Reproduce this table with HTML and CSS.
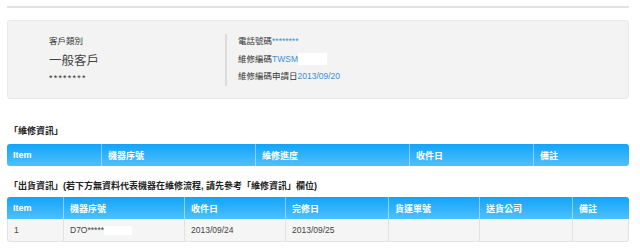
FILE: index.html
```html
<!DOCTYPE html>
<html lang="zh-Hant">
<head>
  <meta charset="UTF-8">
  <title>維修查詢</title>
  <link rel="stylesheet" href="styles.css">
</head>
<body>
  <div class="pagina">
    <hr class="riga">

    <div class="cliente">
      <div class="colonna sinistra">
        <p class="etichetta">客戶類別</p>
        <p class="tipo">一般客戶</p>
        <p class="stelle">********</p>
      </div>
      <div class="colonna destra">
        <p>電話號碼<span class="valore">********</span></p>
        <p>維修編碼<span class="valore">TWSM</span><span class="coperto"></span></p>
        <p>維修編碼申請日<span class="valore">2013/09/20</span></p>
      </div>
    </div>

    <h3 class="titolo">「維修資訊」</h3>
    <table class="tabella t1">
      <thead>
        <tr>
          <th class="c1">Item</th>
          <th class="c2">機器序號</th>
          <th class="c3">維修進度</th>
          <th class="c4">收件日</th>
          <th>備註</th>
        </tr>
      </thead>
    </table>

    <h3 class="titolo secondo">「出貨資訊」(若下方無資料代表機器在維修流程, 請先參考「維修資訊」欄位)</h3>
    <table class="tabella t2">
      <thead>
        <tr>
          <th class="d1">Item</th>
          <th class="d2">機器序號</th>
          <th class="d3">收件日</th>
          <th class="d4">完修日</th>
          <th class="d5">貨運單號</th>
          <th class="d6">送貨公司</th>
          <th>備註</th>
        </tr>
      </thead>
      <tbody>
        <tr>
          <td>1</td>
          <td>D7O*****<span class="coperto piccolo"></span></td>
          <td>2013/09/24</td>
          <td>2013/09/25</td>
          <td></td>
          <td></td>
          <td></td>
        </tr>
      </tbody>
    </table>
  </div>
</body>
</html>
```

FILE: styles.css
```css
* {
  box-sizing: border-box;
  margin: 0;
  padding: 0;
}

body {
  font-family: "Liberation Sans", "Noto Sans CJK TC", sans-serif;
  font-size: 8.5px;
  color: #333;
  background: #fff;
}

.pagina {
  width: 622px;
  margin-left: 7px;
  padding-top: 6px;
}

.riga {
  border: none;
  border-top: 2px solid #e2e2e2;
  margin-bottom: 12px;
}

/* riquadro dati cliente */
.cliente {
  display: flex;
  height: 79px;
  background: #f3f3f3;
  border: 1px solid #e9e9e9;
  border-radius: 3px;
  padding-top: 13px;
}

.colonna.sinistra {
  width: 217px;
  padding-left: 41px;
}

.etichetta {
  line-height: 14px;
}

.tipo {
  font-size: 12.5px;
  line-height: 20px;
  margin-top: 3px;
  color: #444;
}

.stelle {
  line-height: 12px;
  margin-top: 1px;
  font-size: 9px;
  letter-spacing: 1.2px;
}

.colonna.destra {
  border-left: 2px solid #dcdcdc;
  padding-left: 11px;
  height: 52px;
}

.colonna.destra p {
  line-height: 14px;
  margin-bottom: 3.5px;
  display: flex;
  align-items: center;
}

.valore {
  color: #3b8fd8;
}

.coperto {
  display: inline-block;
  width: 29px;
  height: 12px;
  background: #fff;
}

.coperto.piccolo {
  width: 28px;
  height: 9px;
  vertical-align: middle;
}

/* titoli di sezione */
.titolo {
  font-size: 9px;
  font-weight: bold;
  color: #222;
  margin-top: 26px;
  margin-left: 2px;
  line-height: 12px;
  margin-bottom: 7px;
}

.titolo.secondo {
  margin-top: 14px;
  margin-bottom: 5px;
}

/* tabelle */
.tabella {
  width: 100%;
  border-collapse: separate;
  border-spacing: 0;
  table-layout: fixed;
}

.tabella th {
  height: 22px;
  text-align: left;
  padding-left: 6px;
  font-size: 9px;
  color: #fff;
  font-weight: bold;
  background: linear-gradient(#12a4fa, #4ec0fb);
  border-left: 1px solid rgba(255, 255, 255, 0.45);
}

.tabella th:first-child {
  border-left: none;
  border-top-left-radius: 3px;
}

.tabella th:last-child {
  border-top-right-radius: 3px;
}

.t1 th:first-child {
  border-bottom-left-radius: 3px;
}

.t1 th:last-child {
  border-bottom-right-radius: 3px;
}

.tabella td {
  height: 23px;
  padding-left: 6px;
  background: #f5f5f5;
  color: #444;
  border-left: 1px solid #e2e2e2;
  border-bottom: 1px solid #e2e2e2;
}

.tabella td:first-child {
  border-bottom-left-radius: 3px;
}

.tabella td:last-child {
  border-right: 1px solid #e2e2e2;
  border-bottom-right-radius: 3px;
}

.c1 { width: 94px; }
.c2 { width: 154px; }
.c3 { width: 154px; }
.c4 { width: 124px; }

.d1 { width: 56px; }
.d2 { width: 121px; }
.d3 { width: 101px; }
.d4 { width: 103px; }
.d5 { width: 91px; }
.d6 { width: 93px; }
```
